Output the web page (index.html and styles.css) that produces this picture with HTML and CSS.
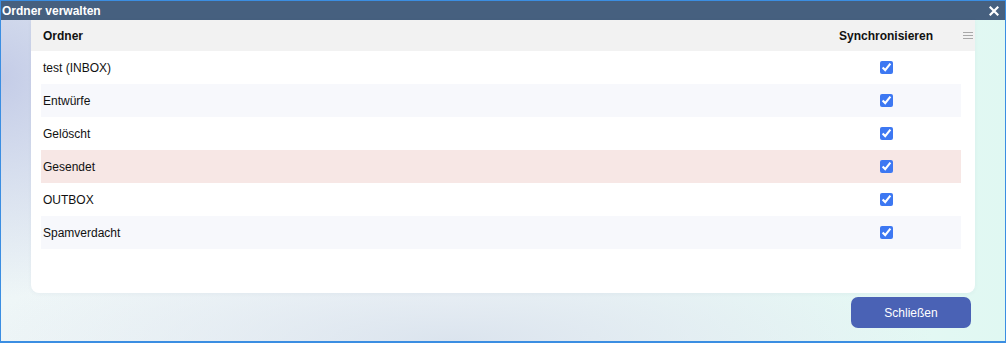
FILE: index.html
```html
<!DOCTYPE html>
<html lang="de">

<head>
    <meta charset="UTF-8" />
    <title>Ordner verwalten</title>
    <link rel="stylesheet" href="styles.css">
</head>

<body>
    <div class="window">
        <div class="titlebar">
            <span class="title">Ordner verwalten</span>
            <button class="close" title="Schließen">
                <svg width="10" height="10" viewBox="0 0 10 10">
                    <path d="M1.5 1.5 L8.5 8.5 M8.5 1.5 L1.5 8.5" stroke="#fff" stroke-width="2.2" stroke-linecap="square" />
                </svg>
            </button>
        </div>

        <div class="content">
            <div class="card">
                <div class="thead">
                    <div class="col-name">Ordner</div>
                    <div class="col-sync">Synchronisieren</div>
                    <div class="col-menu">
                        <span class="menu-icon"><i></i><i></i><i></i></span>
                    </div>
                </div>

                <div class="rows">
                    <div class="row">
                        <div class="col-name">test (INBOX)</div>
                        <div class="col-sync"><input type="checkbox" checked></div>
                    </div>
                    <div class="row alt">
                        <div class="col-name">Entwürfe</div>
                        <div class="col-sync"><input type="checkbox" checked></div>
                    </div>
                    <div class="row">
                        <div class="col-name">Gelöscht</div>
                        <div class="col-sync"><input type="checkbox" checked></div>
                    </div>
                    <div class="row selected">
                        <div class="col-name">Gesendet</div>
                        <div class="col-sync"><input type="checkbox" checked></div>
                    </div>
                    <div class="row">
                        <div class="col-name">OUTBOX</div>
                        <div class="col-sync"><input type="checkbox" checked></div>
                    </div>
                    <div class="row alt">
                        <div class="col-name">Spamverdacht</div>
                        <div class="col-sync"><input type="checkbox" checked></div>
                    </div>
                </div>
            </div>

            <div class="actions">
                <button class="btn">Schließen</button>
            </div>
        </div>
    </div>
</body>

</html>
```

FILE: styles.css
```css
:root {
    --title-bg: #46607f;
    --frame: #3b8ee2;
    --head-bg: #f2f2f2;
    --row-alt: #f7f8fc;
    --row-selected: #f7e7e5;
    --accent: #4a62b5;
    --check: #3d78f2;
}

html,
body {
    margin: 0;
    padding: 0;
}

body {
    font-family: 'Liberation Sans', Arial, sans-serif;
    font-size: 12px;
    color: #111;
}

.window {
    width: 1006px;
    height: 343px;
    box-sizing: border-box;
    border: 1px solid var(--frame);
    border-bottom-width: 2px;
    display: flex;
    flex-direction: column;
}

.titlebar {
    height: 19px;
    flex-shrink: 0;
    background-color: var(--title-bg);
    color: #fff;
    display: flex;
    align-items: center;
    justify-content: space-between;
    padding: 0 6px 0 1px;
}

.title {
    font-weight: bold;
    font-size: 12px;
}

.close {
    background: transparent;
    border: none;
    padding: 0;
    width: 10px;
    height: 10px;
    display: flex;
    cursor: pointer;
}

.content {
    flex: 1;
    display: flex;
    flex-direction: column;
    padding: 0 30px 13px 30px;
    background:
        radial-gradient(ellipse 200px 220px at 0% 18%, #c4cce7 0%, rgba(196, 204, 231, 0) 100%),
        radial-gradient(ellipse 480px 100px at 45% 100%, #dbe4ee 0%, rgba(219, 228, 238, 0) 100%),
        linear-gradient(90deg, #eef6f7 0%, #f4f8fa 45%, #e0f8f2 100%);
}

.card {
    height: 273px;
    background-color: #fff;
    border-radius: 0 0 8px 8px;
    box-shadow: 0 1px 4px rgba(60, 80, 120, 0.05);
}

.thead,
.row {
    display: grid;
    grid-template-columns: 1fr 120px 29px;
    align-items: center;
}

.thead {
    height: 31px;
    background-color: var(--head-bg);
    padding-left: 10px;
    font-weight: bold;
}

.col-name {
    padding-left: 2px;
}

.col-sync {
    text-align: center;
    display: flex;
    justify-content: center;
}

.col-menu {
    display: flex;
    justify-content: flex-end;
    padding-right: 2px;
}

.menu-icon {
    display: flex;
    flex-direction: column;
    gap: 2px;
    width: 10px;
}

.menu-icon i {
    display: block;
    height: 1px;
    background-color: #a8a8a8;
}

.rows {
    padding: 0 14px 0 10px;
}

.row {
    height: 33px;
    grid-template-columns: 1fr 120px 15px;
}

.row.alt {
    background-color: var(--row-alt);
}

.row.selected {
    background-color: var(--row-selected);
}

.row input {
    margin: 0;
    width: 13px;
    height: 13px;
    accent-color: var(--check);
}

.actions {
    display: flex;
    justify-content: flex-end;
    padding: 4px 4px 0 0;
}

.btn {
    width: 120px;
    height: 31px;
    border: none;
    border-radius: 7px;
    background-color: var(--accent);
    color: #fff;
    font-family: inherit;
    font-size: 12px;
    cursor: pointer;
}
```
